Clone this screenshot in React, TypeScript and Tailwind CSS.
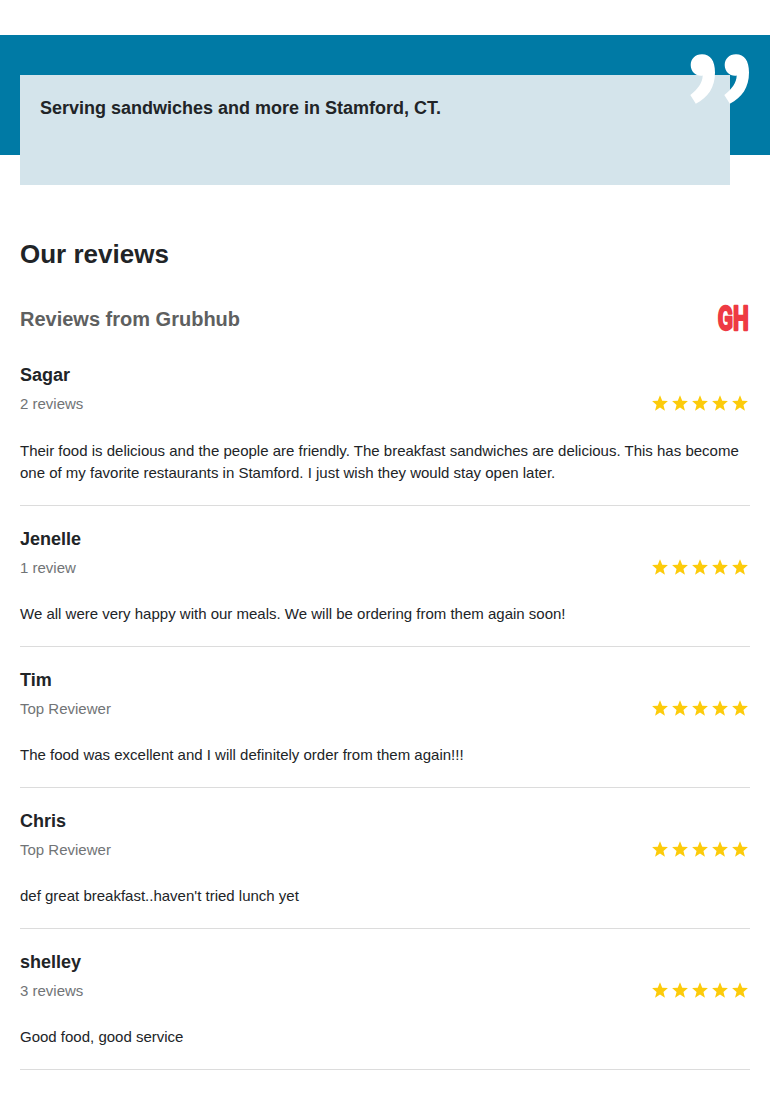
type Review = {
  name: string
  meta: string
  text: string
}

const reviews: Review[] = [
  {
    name: 'Sagar',
    meta: '2 reviews',
    text: 'Their food is delicious and the people are friendly. The breakfast sandwiches are delicious. This has become one of my favorite restaurants in Stamford. I just wish they would stay open later.',
  },
  {
    name: 'Jenelle',
    meta: '1 review',
    text: 'We all were very happy with our meals. We will be ordering from them again soon!',
  },
  {
    name: 'Tim',
    meta: 'Top Reviewer',
    text: 'The food was excellent and I will definitely order from them again!!!',
  },
  {
    name: 'Chris',
    meta: 'Top Reviewer',
    text: "def great breakfast..haven't tried lunch yet",
  },
  {
    name: 'shelley',
    meta: '3 reviews',
    text: 'Good food, good service',
  },
]

function QuoteIcon() {
  return (
    <svg width="60" height="50" viewBox="0 0 60 50" fill="#fff" className="absolute top-[19px] right-5">
      <path d="M12 .2C5 .2 .7 5 .7 11c0 6.200 4.600 10.800 10.300 10.800 .6 0 1.200 0 1.700-.2C12.500 29 8 35 .3 41L5.800 49.700C18 43.500 25 33.500 25 18.500 25 6.500 20.500 .2 12 .2Z" />
      <path d="M46 .2C39 .2 34.700 5 34.700 11c0 6.200 4.600 10.800 10.300 10.800 .6 0 1.200 0 1.700-.2C46.500 29 42 35 34.300 41L39.800 49.700C52 43.500 59 33.500 59 18.500 59 6.500 54.500 .2 46 .2Z" />
    </svg>
  )
}

function GrubhubLogo() {
  return (
    <svg width="34" height="30" viewBox="0 0 34 30" className="block overflow-visible">
      <text
        x="1.800"
        y="25.500"
        textLength="31"
        lengthAdjust="spacingAndGlyphs"
        fill="#ee3a43"
        stroke="#ee3a43"
        strokeWidth="2.300"
        strokeLinejoin="round"
        className="font-[Roboto,'Liberation_Sans',sans-serif] text-[33px] font-bold"
      >
        GH
      </text>
    </svg>
  )
}

function Stars() {
  return (
    <div className="mb-0.5 flex">
      {[1, 2, 3, 4, 5].map((n) => (
        <svg key={n} width="20" height="20" viewBox="-1 -1 26 26" fill="#fccb0a">
          <path d="M12 17.800 18.400 22.200 16.500 14.600 22.300 9.500 14.900 9.100 12 2 9.100 9.100 1.700 9.500 7.500 14.600 5.600 22.200Z" />
        </svg>
      ))}
    </div>
  )
}

export default function App() {
  return (
    <main className="h-[1100px] overflow-hidden bg-white pt-[35px] font-['Liberation_Sans',Arial,sans-serif] text-[#212427]">
      {/* Tagline banner */}
      <section className="relative h-[120px] bg-[#007aa5] pt-10 pr-10 pl-5">
        <div className="h-[110px] bg-[#d4e4eb] px-5 pt-5">
          <p className="text-lg leading-[27px] font-bold">Serving sandwiches and more in Stamford, CT.</p>
        </div>
        <QuoteIcon />
      </section>

      {/* Reviews */}
      <section className="px-5 pt-20">
        <h2 className="text-[26px] leading-[39px] font-bold">Our reviews</h2>
        <div className="mt-[30px] flex h-[30px] items-center justify-between">
          <h3 className="text-xl font-bold text-[#5e6060]">Reviews from Grubhub</h3>
          <GrubhubLogo />
        </div>

        <ul className="mt-[8.4px]">
          {reviews.map((review) => (
            <li key={review.name} className="border-b border-[#dcdcdc] pt-5 pb-[20.3px]">
              <h4 className="text-lg leading-[27px] font-bold">{review.name}</h4>
              <div className="mt-1 flex h-[22px] items-center justify-between">
                <span className="text-[15px] text-[#717476]">{review.meta}</span>
                <Stars />
              </div>
              <p className="mt-[24.2px] text-[15px] leading-[22.5px]">{review.text}</p>
            </li>
          ))}
        </ul>
      </section>
    </main>
  )
}
